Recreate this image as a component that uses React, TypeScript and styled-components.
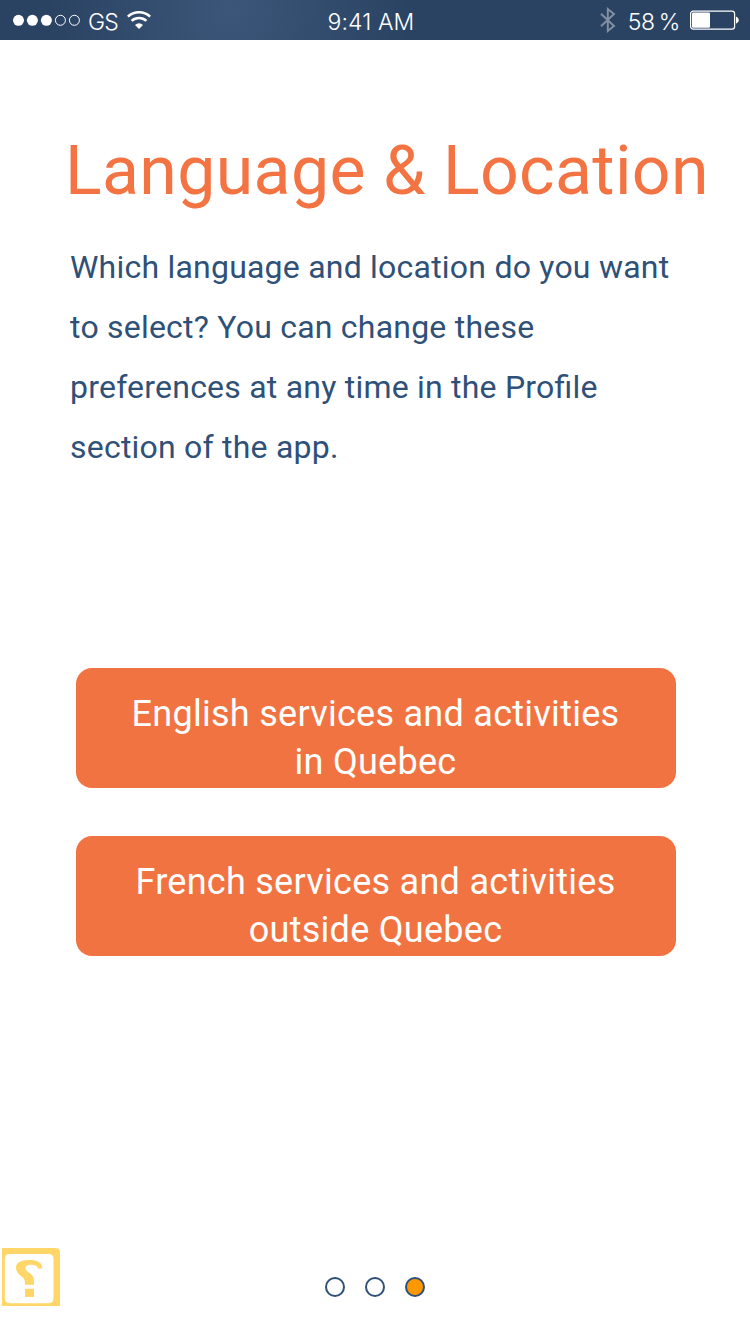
import React from "react";
import styled, { createGlobalStyle } from "styled-components";

const GlobalStyle = createGlobalStyle`
  * { box-sizing: border-box; }
  body { margin: 0; background: #fff; }
`;

const Screen = styled.div`
  display: flex;
  flex-direction: column;
  width: 750px;
  height: 1334px;
  overflow: hidden;
  background: #fff;
  font-family: Roboto, sans-serif;
`;

const StatusBar = styled.header`
  display: grid;
  grid-template-columns: 1fr auto 1fr;
  align-items: center;
  height: 40px;
  flex: none;
  padding: 0 11px 0 12px;
  color: #fff;
  background: radial-gradient(circle at 230px 10px, #3c5679 0, #2a4363 180px);
  font-family: Inter, sans-serif;
  font-size: 23px;
  font-weight: 300;
`;

const StatusGroup = styled.div<{ $end?: boolean }>`
  display: flex;
  align-items: center;
  justify-content: ${(p) => (p.$end ? "flex-end" : "flex-start")};
  svg { display: block; flex: none; }
`;

const StatusText = styled.span<{ $spacing?: number }>`
  line-height: 28px;
  padding-top: 3px;
  white-space: nowrap;
  letter-spacing: ${(p) => p.$spacing ?? 0}px;
`;

const Carrier = styled(StatusText)`
  margin: 0 9px 0 7px;
`;

const Clock = styled(StatusText)`
  padding-right: 9px;
`;

const Percent = styled(StatusText)`
  margin: 0 10px 0 12px;
  word-spacing: -2px;
`;

const Content = styled.main`
  display: flex;
  flex-direction: column;
  flex: 1;
  padding: 91px 0 0 65px;
`;

const Title = styled.h1`
  margin: 0;
  color: #f37342;
  font-size: 68px;
  font-weight: 400;
  line-height: 80px;
  letter-spacing: 0.35px;
  white-space: nowrap;
`;

const Intro = styled.p`
  width: 640px;
  margin: 26px 0 0 5px;
  color: #2f5077;
  font-size: 32px;
  line-height: 60px;
  letter-spacing: 0.22px;
  font-feature-settings: "liga" 1;
`;

const Choices = styled.div`
  display: flex;
  flex-direction: column;
  gap: 48px;
  margin: 191px 0 0 11px;
`;

const ChoiceButton = styled.button`
  width: 600px;
  height: 120px;
  padding: 22px 1px 0 0;
  display: flex;
  justify-content: center;
  align-items: flex-start;
  border: 0;
  border-radius: 16px;
  background: #f27342;
  color: #fff;
  font: 400 36px/48px Roboto, sans-serif;
  letter-spacing: 0.28px;
  text-align: center;
`;

const Footer = styled.footer`
  display: grid;
  grid-template-columns: 1fr auto 1fr;
  align-items: center;
  flex: none;
  height: 58px;
  margin-bottom: 28px;
  padding: 0 2px;
`;

const HelpButton = styled.button`
  width: 58px;
  height: 58px;
  padding: 0;
  border: 0;
  background: none;
  svg { display: block; }
`;

const Pager = styled.nav`
  display: flex;
  gap: 20px;
  padding-top: 20px;
`;

const PageDot = styled.span<{ $active?: boolean }>`
  width: 20px;
  height: 20px;
  border: 2px solid #2f5077;
  border-radius: 50%;
  background: ${(p) => (p.$active ? "#ff9800" : "#fff")};
`;

const Signal = () => (
  <svg width="69" height="12" viewBox="0 0 69 12" fill="#fff">
    {[6.5, 20.4, 34.4].map((x) => (
      <circle key={x} cx={x} cy="6.3" r="5.5" />
    ))}
    {[48.4, 62.4].map((x) => (
      <circle key={x} cx={x} cy="6.3" r="5" fill="none" stroke="#fff" />
    ))}
  </svg>
);

const Wifi = () => (
  <svg width="24" height="18" viewBox="0 0 24 18" fill="none" stroke="#fff" strokeWidth="2.6">
    <path d="M0.9 5.6C7 -0.2 17 -0.2 23.1 5.6" />
    <path d="M4.6 9.9C8.8 6 15.2 6 19.4 9.9" />
    <path d="M12 18L8 14Q12 10.3 16 14Z" fill="#fff" stroke="none" />
  </svg>
);

const Bluetooth = () => (
  <svg width="16" height="26" viewBox="0 0 16 26" fill="none" stroke="#8390a4" strokeWidth="1.9">
    <path d="M1 6.7L14 19L7.8 24V2L14 7L1 19.3" />
  </svg>
);

const Battery = () => (
  <svg width="49" height="20" viewBox="0 0 49 20">
    <rect x="0.6" y="1.1" width="44" height="18" rx="2.6" fill="none" stroke="#fff" strokeWidth="1.2" />
    <rect x="2" y="2.6" width="18" height="15.2" rx="1" fill="#fff" />
    <path d="M46 6.6Q48.8 7.8 48.8 10.2T46 13.8Z" fill="#fff" />
  </svg>
);

const HelpIcon = () => (
  <svg width="58" height="58" viewBox="0 0 58 58" fill="#ffd667">
    <path
      fillRule="evenodd"
      d="M0 0H53Q58 0 58 5V58H0ZM8 6Q2.8 6 2.8 11V50Q2.8 55.2 8 55.2H46.5Q51.5 55.2 51.5 50V11Q51.5 6 46.5 6Z"
    />
    <path d="M40.3 20.6C40.3 14.5 35.5 12 27 12C18.5 12 14 15 14 19.3C14 23.8 16.5 26.3 19.8 28.8C22.8 31 23 32.8 23 36.8H32V33.5C32 28.8 30.5 27 27 24.7C22 21.5 21.8 16.7 28.5 16.7C33.5 16.7 35.7 17.8 35.9 20.6Z" />
    <path d="M23 40.8H32V49H23Z" />
  </svg>
);

export default function App() {
  return (
    <Screen>
      <GlobalStyle />
      <StatusBar>
        <StatusGroup>
          <Signal />
          <Carrier $spacing={-0.8}>GS</Carrier>
          <Wifi />
        </StatusGroup>
        <Clock $spacing={0.1}>9:41 AM</Clock>
        <StatusGroup $end>
          <Bluetooth />
          <Percent $spacing={-0.4}>58 %</Percent>
          <Battery />
        </StatusGroup>
      </StatusBar>
      <Content>
        <Title>Language &amp; Location</Title>
        <Intro>
          Which language and location do you want
          <br />
          to select? You can change these
          <br />
          preferences at any time in the Profile
          <br />
          section of the app.
        </Intro>
        <Choices>
          <ChoiceButton>
            English services and activities
            <br />
            in Quebec
          </ChoiceButton>
          <ChoiceButton>
            French services and activities
            <br />
            outside Quebec
          </ChoiceButton>
        </Choices>
      </Content>
      <Footer>
        <HelpButton aria-label="Help">
          <HelpIcon />
        </HelpButton>
        <Pager>
          <PageDot />
          <PageDot />
          <PageDot $active />
        </Pager>
      </Footer>
    </Screen>
  );
}
